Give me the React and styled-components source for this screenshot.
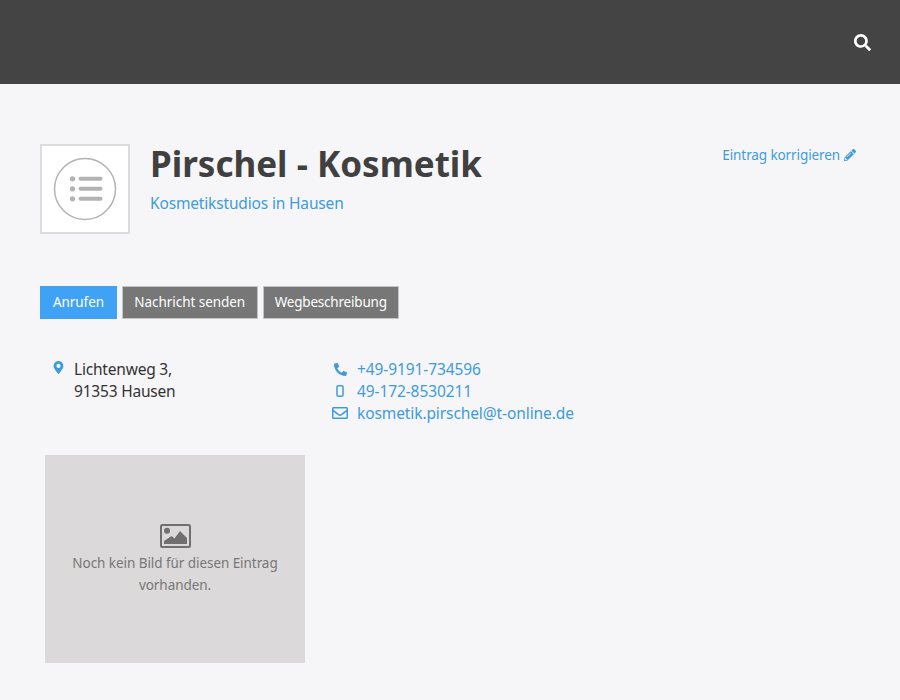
import React from 'react'
import styled, { createGlobalStyle } from 'styled-components'
import { FaSearch, FaPencilAlt, FaMapMarkerAlt, FaPhone, FaRegEnvelope } from 'react-icons/fa'

const Global = createGlobalStyle`
  html, body {
    margin: 0;
    padding: 0;
    background: #f6f6f8;
    font-family: "Noto Sans", "Open Sans", sans-serif;
  }
`
const TopBar = styled.header`
  height: 84px;
  background: #444444;
  display: flex;
  align-items: center;
  justify-content: flex-end;
  padding: 0 29px 0 0;
  color: #fff;
  font-size: 17px;
`
const Page = styled.main`
  padding: 60px 44px 37px 40px;
`
const Head = styled.div`
  display: flex;
  align-items: flex-start;
  height: 142px;
`
const Logo = styled.div`
  width: 90px;
  height: 90px;
  box-sizing: border-box;
  border: 2px solid #dcdcdc;
  background: #fff;
  display: flex;
  align-items: center;
  justify-content: center;
  flex: none;
`
const TitleBlock = styled.div`
  margin-left: 20px;
  flex: 1;
`
const Title = styled.h1`
  margin: 0;
  font-size: 35px;
  line-height: 39px;
  font-weight: 700;
  color: #404040;
`
const Sub = styled.a`
  display: block;
  margin-top: 10px;
  font-size: 15.5px;
  letter-spacing: -0.16px;
  line-height: 20px;
  color: #3f9bdc;
`
const Correct = styled.a`
  display: flex;
  align-items: center;
  gap: 4px;
  margin-top: 2px;
  font-size: 13.5px;
  letter-spacing: -0.1px;
  line-height: 18px;
  color: #3f9bdc;
`
const Buttons = styled.div`
  display: flex;
  gap: 5px;
`
const Btn = styled.button`
  height: 33px;
  width: ${p => p.$w}px;
  box-sizing: border-box;
  padding: 0 0 1px;
  border: 1px solid ${p => (p.$primary ? '#3fa2f5' : '#c4c4c4')};
  background: ${p => (p.$primary ? '#3fa2f5' : '#777777')};
  color: #fff;
  font: 13.5px "Noto Sans", sans-serif;
  letter-spacing: ${p => p.$spacing}px;
`
const Contact = styled.section`
  display: grid;
  grid-template-columns: 292px 1fr;
  margin-top: 39px;
`
const Row = styled.div`
  display: flex;
  font-size: 15.5px;
  letter-spacing: ${p => (p.$link ? -0.1 : -0.2)}px;
  line-height: 22px;
  color: ${p => (p.$link ? '#3f9bdc' : '#333333')};
`
const IconCell = styled.span`
  width: 16px;
  flex: none;
  display: flex;
  justify-content: center;
  align-items: center;
  height: 22px;
  margin-right: 9px;
  color: #3f9bdc;
  font-size: ${p => p.$size}px;
`
const PinCell = styled.span`
  width: 34px;
  box-sizing: border-box;
  padding: 3px 0 0 12px;
  flex: none;
  color: #3f9bdc;
  font-size: 13px;
  line-height: 0;
`
const FlipPhone = styled(FaPhone)`
  transform: scaleX(-1);
`
const Placeholder = styled.div`
  margin: 31px 0 0 5px;
  width: 260px;
  height: 208px;
  box-sizing: border-box;
  padding-top: 1px;
  background: #dbd9da;
  color: #777777;
  display: flex;
  flex-direction: column;
  align-items: center;
  justify-content: center;
  text-align: center;
  font-size: 13.5px;
  letter-spacing: -0.06px;
  line-height: 22px;
`
const PictureIcon = styled.div`
  height: 24px;
  line-height: 0;
  margin-bottom: 4px;
  color: #6f6f6f;
`

const ListBadge = () => (
  <svg width="64" height="64" viewBox="0 0 64 64">
    <circle cx="32" cy="32" r="30.5" fill="none" stroke="#b3b3b3" strokeWidth="1.5" />
    <g fill="#b3b3b3">
      <circle cx="19.5" cy="21.8" r="2.6" />
      <circle cx="19.5" cy="31.8" r="2.6" />
      <circle cx="19.5" cy="41.8" r="2.6" />
      <rect x="25.5" y="19.8" width="24" height="4" rx="2" />
      <rect x="25.5" y="29.8" width="24" height="4" rx="2" />
      <rect x="25.5" y="39.8" width="24" height="4" rx="2" />
    </g>
  </svg>
)

const MobileOutline = () => (
  <svg width="8" height="12" viewBox="0 0 8 12">
    <rect x="1" y="0.8" width="6" height="10.4" rx="1.3" fill="none" stroke="currentColor" strokeWidth="1.5" />
  </svg>
)

const PictureGlyph = () => (
  <svg width="31" height="24" viewBox="0 0 31 24">
    <rect x="1" y="1" width="29" height="22" rx="1.5" fill="none" stroke="currentColor" strokeWidth="2" />
    <circle cx="7" cy="6.8" r="3" fill="currentColor" />
    <path d="M4 20 V17 L11.5 12 L14.5 14.5 L20 7 L27 14 V20 Z" fill="currentColor" />
  </svg>
)

export default function App() {
  return (
    <>
      <Global />
      <TopBar><FaSearch /></TopBar>
      <Page>
        <Head>
          <Logo><ListBadge /></Logo>
          <TitleBlock>
            <Title>Pirschel - Kosmetik</Title>
            <Sub>Kosmetikstudios in Hausen</Sub>
          </TitleBlock>
          <Correct>Eintrag korrigieren <FaPencilAlt size={12} /></Correct>
        </Head>
        <Buttons>
          <Btn $primary $w={77} $spacing={-0.1}>Anrufen</Btn>
          <Btn $w={135.5} $spacing={-0.05}>Nachricht senden</Btn>
          <Btn $w={136.5} $spacing={-0.2}>Wegbeschreibung</Btn>
        </Buttons>
        <Contact>
          <Row>
            <PinCell><FaMapMarkerAlt /></PinCell>
            <div>Lichtenweg 3,<br />91353 Hausen</div>
          </Row>
          <div>
            <Row $link><IconCell $size={13}><FlipPhone /></IconCell>+49-9191-734596</Row>
            <Row $link><IconCell $size={12}><MobileOutline /></IconCell>49-172-8530211</Row>
            <Row $link><IconCell $size={16}><FaRegEnvelope /></IconCell>kosmetik.pirschel@t-online.de</Row>
          </div>
        </Contact>
        <Placeholder>
          <PictureIcon><PictureGlyph /></PictureIcon>
          <span>Noch kein Bild für diesen Eintrag<br />vorhanden.</span>
        </Placeholder>
      </Page>
    </>
  )
}
